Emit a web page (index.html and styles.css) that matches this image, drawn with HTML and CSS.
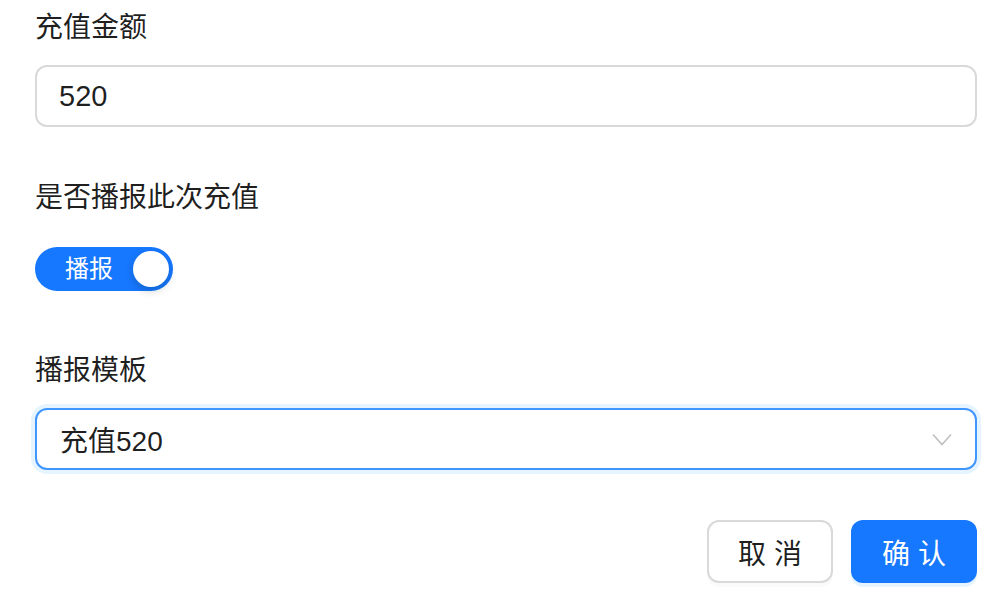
FILE: index.html
```html
<!DOCTYPE html>
<html lang="zh">
<head>
<meta charset="utf-8">
<link rel="stylesheet" href="styles.css">
</head>
<body>
<form class="form">
  <div class="item item-amount">
    <div class="label">充值金额</div>
    <div class="input">520</div>
  </div>
  <div class="item item-switch">
    <div class="label">是否播报此次充值</div>
    <div class="switch-row">
      <div class="switch">
        <span class="switch-text">播报</span>
        <span class="knob"></span>
      </div>
    </div>
  </div>
  <div class="item item-template">
    <div class="label">播报模板</div>
    <div class="select">
      <span class="select-value">充值520</span>
      <svg class="arrow" width="20" height="14" viewBox="0 0 20 14"><polyline points="1,1.5 10,11.5 19,1.5" fill="none" stroke="#bfbfbf" stroke-width="1.6"/></svg>
    </div>
  </div>
  <div class="actions">
    <button type="button" class="btn btn-default">取 消</button>
    <button type="button" class="btn btn-primary">确 认</button>
  </div>
</form>
</body>
</html>
```
FILE: styles.css
```css
* { box-sizing: border-box; }
html, body { margin: 0; padding: 0; background: #fff; }
body {
  font-family: "Liberation Sans", "Noto Sans CJK SC", sans-serif;
  color: rgba(0, 0, 0, 0.88);
  width: 1002px;
  height: 602px;
  overflow: hidden;
}
.form {
  display: flex;
  flex-direction: column;
  padding: 6px 25px 0 35px;
}
.item { display: flex; flex-direction: column; }
.label {
  font-size: 28px;
  line-height: 44px;
  height: 44px;
}
.item-amount .label { margin-bottom: 15px; }
.input {
  height: 62px;
  border: 2px solid #d9d9d9;
  border-radius: 12px;
  font-size: 29px;
  line-height: 58px;
  padding: 0 22px;
}
.item-switch { margin-top: 49px; }
.switch-row { margin-top: 27px; display: flex; }
.switch {
  width: 138px;
  height: 44px;
  border-radius: 22px;
  background: #1677ff;
  display: flex;
  align-items: center;
  justify-content: space-between;
  padding: 0 4px 0 30px;
}
.switch-text {
  color: #fff;
  font-size: 24px;
  line-height: 44px;
}
.knob {
  width: 36px;
  height: 36px;
  border-radius: 50%;
  background: #fff;
  box-shadow: 0 4px 8px rgba(0, 35, 11, 0.2);
}
.item-template { margin-top: 58px; }
.item-template .label { margin-bottom: 15px; }
.select {
  height: 62px;
  border: 2px solid #4096ff;
  border-radius: 12px;
  box-shadow: 0 0 0 4px rgba(5, 145, 255, 0.1);
  display: flex;
  align-items: center;
  justify-content: space-between;
  padding: 0 23px 0 23px;
  font-size: 28px;
}
.arrow { display: block; margin-top: 2px; }
.actions {
  display: flex;
  justify-content: flex-end;
  gap: 18px;
  margin-top: 50px;
}
.btn {
  height: 63px;
  width: 126px;
  border-radius: 12px;
  font-family: "Liberation Sans", "Noto Sans CJK SC", sans-serif;
  font-size: 28px;
  padding: 0;
  cursor: pointer;
}
.btn-default {
  background: #fff;
  border: 2px solid #d9d9d9;
  color: rgba(0, 0, 0, 0.88);
  box-shadow: 0 4px 0 rgba(0, 0, 0, 0.02);
}
.btn-primary {
  background: #1677ff;
  border: none;
  color: #fff;
  box-shadow: 0 4px 0 rgba(5, 145, 255, 0.1);
}
```
